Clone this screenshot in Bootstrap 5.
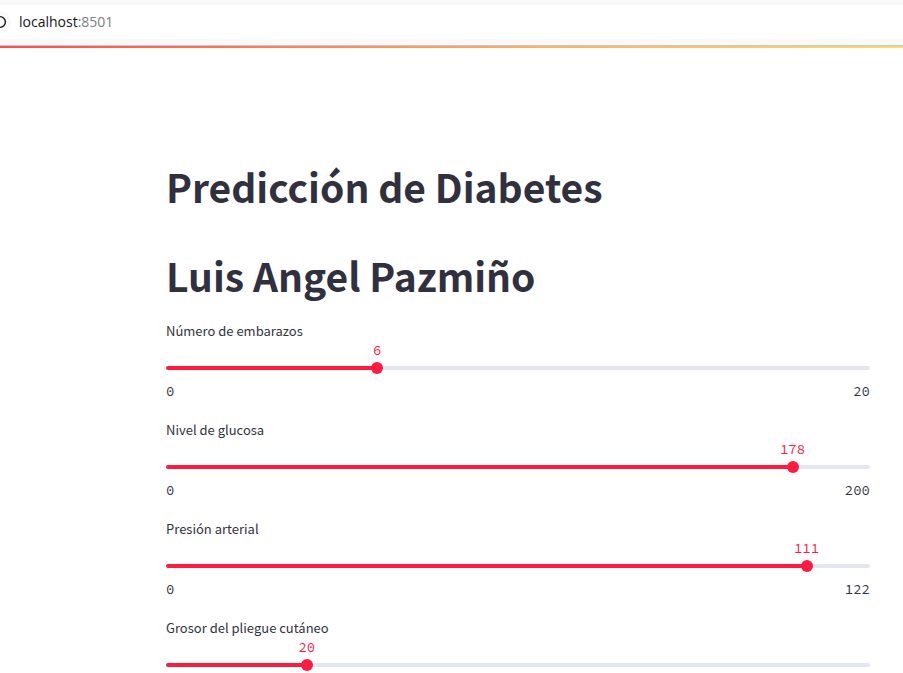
<!DOCTYPE html>
<html lang="es">
<head>
<meta charset="utf-8">
<meta name="viewport" content="width=device-width, initial-scale=1">
<title>Predicción de Diabetes</title>
<link href="https://cdn.jsdelivr.net/npm/bootstrap@5.3.0/dist/css/bootstrap.min.css" rel="stylesheet">
<style>
  body { font-family: "Noto Sans CJK SC", "Open Sans", sans-serif; color: #31333f; }
  .browser-bar { background: #f9f9fa; padding: 5px 0 6px; border-bottom: 1px solid #c4c8cc; }
  .address { height: 34px; gap: 8px; background: #fff; }
  .site-info { width: 22px; height: 22px; margin-left: -11px; background: #f9f9fa; }
  .url-box { font: 14px/20px "Open Sans", sans-serif; color: #15141a; }
  .url-port { color: #7d7d82; }
  .decoration { height: 2px; background: linear-gradient(90deg, #ff4b4b, #ffb060 60%, #f6dc6c); }
  .app-main { padding: 112px 33px 6px 166px; }
  .app-title { font-size: 39px; line-height: 52px; font-weight: 700; margin-bottom: 37px; color: #31303f; }
  .app-title.last { margin-bottom: 19px; }
  .field + .field { margin-top: 18px; }
  .field-label { font-size: 13px; line-height: 22px; margin-bottom: 24px; }
  .track { height: 4px; border-radius: 4px;
    background: linear-gradient(90deg, #ff1a40 var(--pos), #e3e6f0 var(--pos)); }
  .track output { left: var(--pos); bottom: 10px; color: #ff1a40; }
  .mono { font: 14px/20px "Source Code Pro", "Noto Sans Mono CJK SC", "DejaVu Sans Mono", monospace; }
  .slider { appearance: none; -webkit-appearance: none; background: none; flex: 1 0 auto;
    height: 12px; margin: 0 -6px; cursor: pointer; }
  .slider::-webkit-slider-runnable-track { height: 12px; background: none; }
  .slider::-webkit-slider-thumb { -webkit-appearance: none; width: 12px; height: 12px; border: 0; border-radius: 50%; background: #ff1a40; }
  .slider::-moz-range-thumb { width: 12px; height: 12px; border: 0; border-radius: 50%; background: #ff1a40; }
  .limits { margin-top: 11px; }
</style>
</head>
<body class="bg-white">
<header>
  <div class="browser-bar">
    <div class="address d-flex align-items-center">
      <span class="site-info rounded-circle d-flex align-items-center justify-content-center">
        <svg width="14" height="14" viewBox="0 0 14 14" fill="none" stroke="#15141a" stroke-width="1.4" aria-hidden="true"><circle cx="7" cy="7" r="5.4"/></svg>
      </span>
      <a class="url-box text-decoration-none" href="http://localhost:8501">localhost<span class="url-port">:8501</span></a>
    </div>
  </div>
  <div class="decoration"></div>
</header>
<main class="app-main">
  <h1 class="app-title">Predicción de Diabetes</h1>
  <h1 class="app-title last">Luis Angel Pazmiño</h1>
  <form>
    <div class="field">
      <label class="field-label d-block" for="embarazos">Número de embarazos</label>
      <div class="track position-relative d-flex align-items-center" style="--pos: 30%">
        <output class="mono position-absolute translate-middle-x" for="embarazos">6</output>
        <input class="slider" type="range" id="embarazos" min="0" max="20" value="6">
      </div>
      <div class="limits mono d-flex justify-content-between"><span>0</span><span>20</span></div>
    </div>
    <div class="field">
      <label class="field-label d-block" for="glucosa">Nivel de glucosa</label>
      <div class="track position-relative d-flex align-items-center" style="--pos: 89%">
        <output class="mono position-absolute translate-middle-x" for="glucosa">178</output>
        <input class="slider" type="range" id="glucosa" min="0" max="200" value="178">
      </div>
      <div class="limits mono d-flex justify-content-between"><span>0</span><span>200</span></div>
    </div>
    <div class="field">
      <label class="field-label d-block" for="presion">Presión arterial</label>
      <div class="track position-relative d-flex align-items-center" style="--pos: 90.98%">
        <output class="mono position-absolute translate-middle-x" for="presion">111</output>
        <input class="slider" type="range" id="presion" min="0" max="122" value="111">
      </div>
      <div class="limits mono d-flex justify-content-between"><span>0</span><span>122</span></div>
    </div>
    <div class="field">
      <label class="field-label d-block" for="grosor">Grosor del pliegue cutáneo</label>
      <div class="track position-relative d-flex align-items-center" style="--pos: 20%">
        <output class="mono position-absolute translate-middle-x" for="grosor">20</output>
        <input class="slider" type="range" id="grosor" min="0" max="100" value="20">
      </div>
    </div>
  </form>
</main>
<script src="https://cdn.jsdelivr.net/npm/bootstrap@5.3.0/dist/js/bootstrap.bundle.min.js"></script>
<script>
  document.querySelectorAll('.slider').forEach(function (slider) {
    slider.addEventListener('input', function () {
      slider.parentElement.style.setProperty('--pos', slider.value / slider.max * 100 + '%');
      slider.previousElementSibling.textContent = slider.value;
    });
  });
</script>
</body>
</html>
